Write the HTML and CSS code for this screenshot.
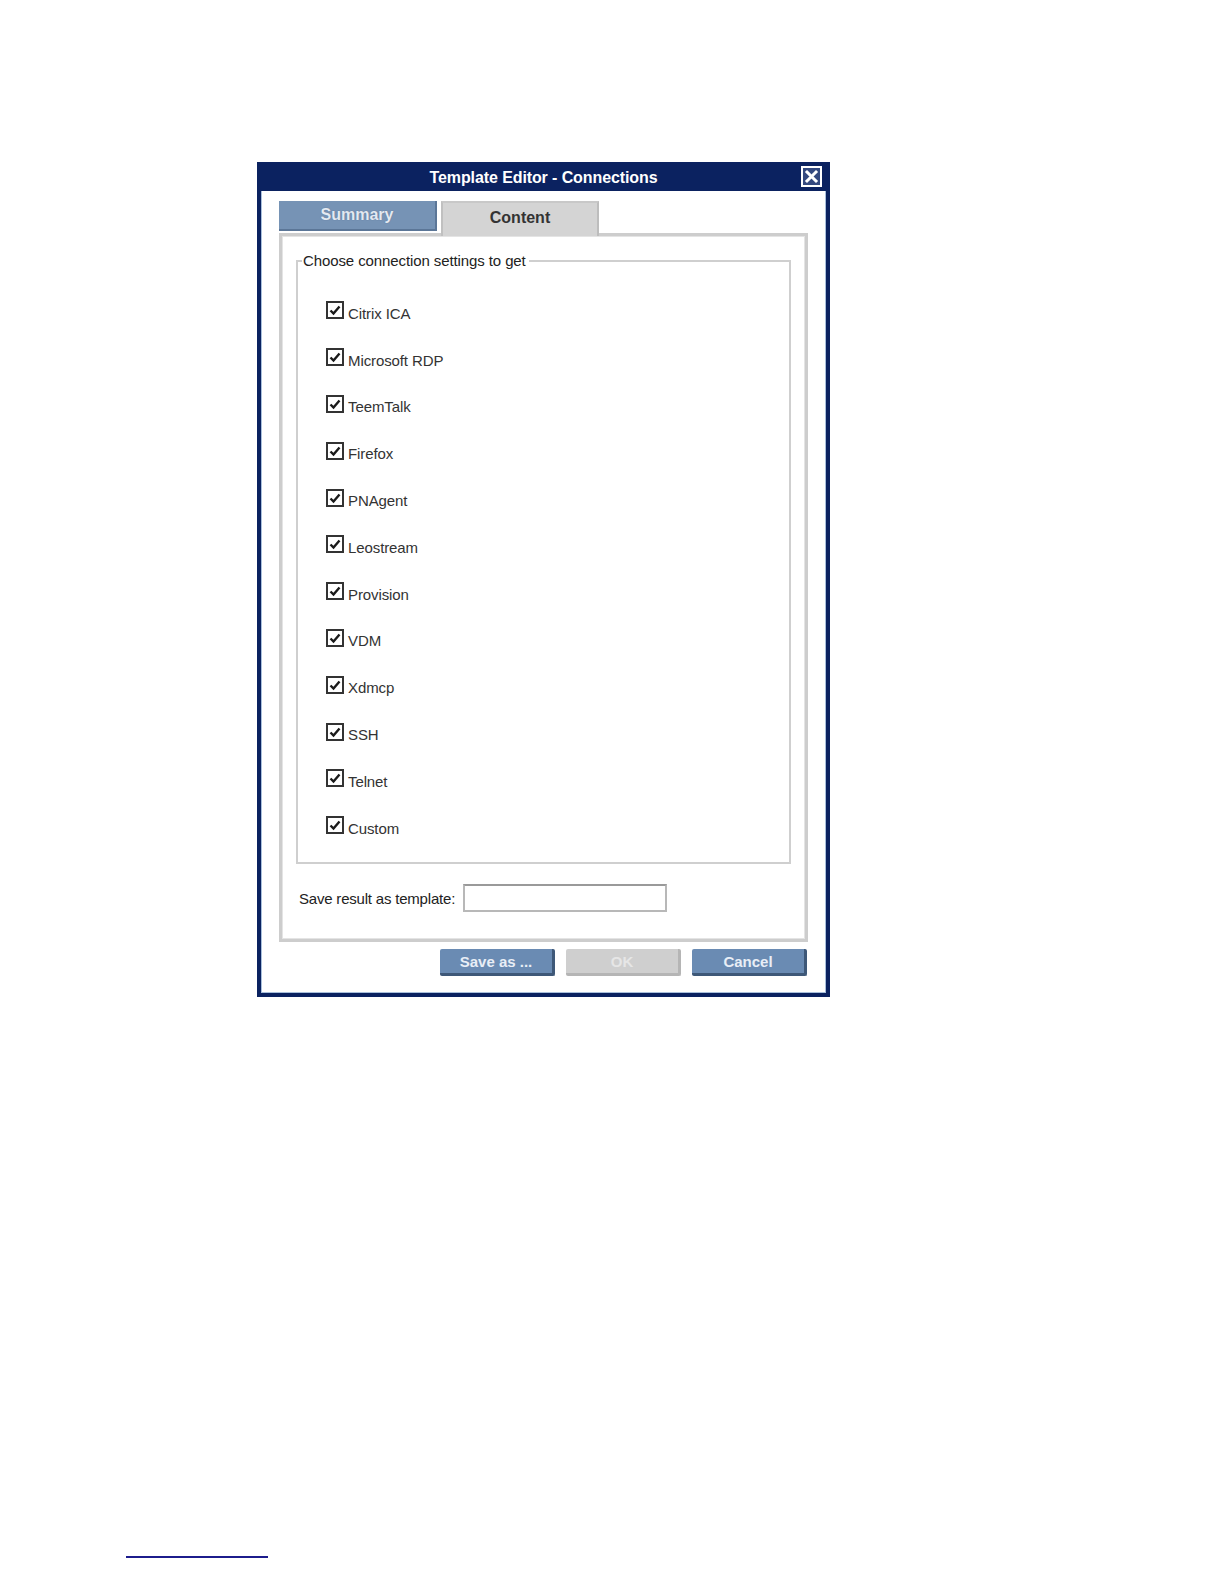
FILE: index.html
```html
<!DOCTYPE html>
<html lang="en">
<head>
    <meta charset="UTF-8">
    <title>Template Editor - Connections</title>
    <link rel="stylesheet" href="styles.css">
</head>
<body>
    <div class="page">
        <div class="dialog">
            <div class="titlebar">
                <span class="title">Template Editor - Connections</span>
                <span class="close">
                    <svg width="17" height="17" viewBox="0 0 17 17">
                        <path d="M4 4 L13 13 M13 4 L4 13" stroke="#fff" stroke-width="3" stroke-linecap="square"/>
                    </svg>
                </span>
            </div>
            <div class="body">
                <div class="tabs">
                    <div class="tab inactive">Summary</div>
                    <div class="tab active">Content</div>
                </div>
                <div class="panel">
                    <fieldset class="group">
                        <legend>Choose connection settings to get</legend>
                        <div class="items">
                            <label class="item"><span class="box"><svg width="12" height="12" viewBox="0 0 12 12"><path d="M1.5 6.5 L4.5 9.5 L10.5 2.5" fill="none" stroke="#1a1a1a" stroke-width="2.4"/></svg></span>Citrix ICA</label>
                            <label class="item"><span class="box"><svg width="12" height="12" viewBox="0 0 12 12"><path d="M1.5 6.5 L4.5 9.5 L10.5 2.5" fill="none" stroke="#1a1a1a" stroke-width="2.4"/></svg></span>Microsoft RDP</label>
                            <label class="item"><span class="box"><svg width="12" height="12" viewBox="0 0 12 12"><path d="M1.5 6.5 L4.5 9.5 L10.5 2.5" fill="none" stroke="#1a1a1a" stroke-width="2.4"/></svg></span>TeemTalk</label>
                            <label class="item"><span class="box"><svg width="12" height="12" viewBox="0 0 12 12"><path d="M1.5 6.5 L4.5 9.5 L10.5 2.5" fill="none" stroke="#1a1a1a" stroke-width="2.4"/></svg></span>Firefox</label>
                            <label class="item"><span class="box"><svg width="12" height="12" viewBox="0 0 12 12"><path d="M1.5 6.5 L4.5 9.5 L10.5 2.5" fill="none" stroke="#1a1a1a" stroke-width="2.4"/></svg></span>PNAgent</label>
                            <label class="item"><span class="box"><svg width="12" height="12" viewBox="0 0 12 12"><path d="M1.5 6.5 L4.5 9.5 L10.5 2.5" fill="none" stroke="#1a1a1a" stroke-width="2.4"/></svg></span>Leostream</label>
                            <label class="item"><span class="box"><svg width="12" height="12" viewBox="0 0 12 12"><path d="M1.5 6.5 L4.5 9.5 L10.5 2.5" fill="none" stroke="#1a1a1a" stroke-width="2.4"/></svg></span>Provision</label>
                            <label class="item"><span class="box"><svg width="12" height="12" viewBox="0 0 12 12"><path d="M1.5 6.5 L4.5 9.5 L10.5 2.5" fill="none" stroke="#1a1a1a" stroke-width="2.4"/></svg></span>VDM</label>
                            <label class="item"><span class="box"><svg width="12" height="12" viewBox="0 0 12 12"><path d="M1.5 6.5 L4.5 9.5 L10.5 2.5" fill="none" stroke="#1a1a1a" stroke-width="2.4"/></svg></span>Xdmcp</label>
                            <label class="item"><span class="box"><svg width="12" height="12" viewBox="0 0 12 12"><path d="M1.5 6.5 L4.5 9.5 L10.5 2.5" fill="none" stroke="#1a1a1a" stroke-width="2.4"/></svg></span>SSH</label>
                            <label class="item"><span class="box"><svg width="12" height="12" viewBox="0 0 12 12"><path d="M1.5 6.5 L4.5 9.5 L10.5 2.5" fill="none" stroke="#1a1a1a" stroke-width="2.4"/></svg></span>Telnet</label>
                            <label class="item"><span class="box"><svg width="12" height="12" viewBox="0 0 12 12"><path d="M1.5 6.5 L4.5 9.5 L10.5 2.5" fill="none" stroke="#1a1a1a" stroke-width="2.4"/></svg></span>Custom</label>
                        </div>
                    </fieldset>
                    <div class="save-row">
                        <span class="save-label">Save result as template:</span>
                        <span class="input"></span>
                    </div>
                </div>
                <div class="buttons">
                    <div class="btn blue">Save as ...</div>
                    <div class="btn disabled">OK</div>
                    <div class="btn blue">Cancel</div>
                </div>
            </div>
        </div>
        <div class="footline"></div>
    </div>
</body>
</html>
```

FILE: styles.css
```css
html, body {
    margin: 0;
    padding: 0;
    background: #fff;
}

.page {
    padding-top: 162px;
    font-family: "Liberation Sans", Arial, sans-serif;
}

.dialog {
    margin-left: 257px;
    width: 573px;
    height: 835px;
    box-sizing: border-box;
    background: #0b2260;
    padding: 0 4px 4px 4px;
    display: flex;
    flex-direction: column;
}

.titlebar {
    height: 29px;
    display: flex;
    align-items: center;
    justify-content: center;
    position: relative;
}
.title {
    color: #fff;
    font-weight: bold;
    font-size: 16px;
    letter-spacing: -0.1px;
    margin-top: 2px;
}
.close {
    position: absolute;
    right: 4px;
    top: 4px;
    width: 17px;
    height: 17px;
    border: 2px solid #fff;
    box-sizing: content-box;
    display: flex;
    background: #34497f;
}

.body {
    flex-grow: 1;
    background: #fff;
    border: 1px solid #a9c0dc;
    border-top: none;
    padding: 10px 17px 0 17px;
    display: flex;
    flex-direction: column;
}

.tabs {
    display: flex;
    gap: 4px;
    height: 32px;
    align-items: flex-start;
}
.tab {
    width: 158px;
    display: flex;
    align-items: center;
    justify-content: center;
    font-size: 16px;
    font-weight: bold;
    box-sizing: border-box;
}
.tab.inactive {
    height: 30px;
    background: #7693b5;
    color: #e3e9f1;
    border-bottom: 2px solid #5b7697;
    border-right: 2px solid #5b7697;
    text-shadow: 0 0 1px #50688a;
}
.tab.active {
    height: 35px;
    background: #d4d4d4;
    color: #333;
    border-top: 2px solid #c8c8c8;
    border-left: 2px solid #c0c0c0;
    border-right: 2px solid #bdbdbd;
    position: relative;
    z-index: 1;
    padding-bottom: 4px;
}

.panel {
    height: 709px;
    box-sizing: border-box;
    border: 3px solid #cdcdcd;
    outline: 1px solid #e4e4e4;
    outline-offset: -4px;
    padding: 16px 14px 0 14px;
    display: flex;
    flex-direction: column;
}

.group {
    margin: 0;
    border: 2px solid #cfcfcf;
    padding: 21px 0 0 0;
    height: 612px;
    box-sizing: border-box;
}
.group legend {
    font-size: 15px;
    color: #222;
    padding: 0 3px 0 1px;
    margin-left: 4px;
    letter-spacing: -0.1px;
}

.items {
    display: flex;
    flex-direction: column;
    padding-left: 28px;
}
.item {
    height: 46.8px;
    display: flex;
    align-items: center;
    font-size: 15px;
    color: #333;
    letter-spacing: -0.1px;
}
.box {
    width: 14px;
    height: 14px;
    border: 2px solid #333;
    background: #fff;
    display: flex;
    align-items: center;
    justify-content: center;
    margin-right: 4px;
    margin-top: -6px;
}

.save-row {
    display: flex;
    align-items: center;
    margin-top: 20px;
    padding-left: 3px;
}
.save-label {
    font-size: 15px;
    color: #222;
    letter-spacing: -0.2px;
    margin-right: 8px;
}
.input {
    width: 200px;
    height: 24px;
    border: 2px solid #b8b8b8;
    border-top-color: #9a9a9a;
    background: #fff;
}

.buttons {
    display: flex;
    justify-content: flex-end;
    gap: 11px;
    margin-top: 7px;
    padding-right: 1px;
}
.btn {
    width: 115px;
    height: 27px;
    box-sizing: border-box;
    display: flex;
    align-items: center;
    justify-content: center;
    font-size: 15px;
    font-weight: bold;
    border-radius: 2px;
}
.btn.blue {
    background: #6a8bb3;
    color: #e8eef6;
    border-right: 3px solid #3e5878;
    border-bottom: 3px solid #3e5878;
}
.btn.disabled {
    background: #cfcfcf;
    color: #e6e6e6;
    border-right: 3px solid #b5b5b5;
    border-bottom: 3px solid #b5b5b5;
}

.footline {
    margin-top: 559px;
    margin-left: 126px;
    width: 142px;
    height: 2px;
    background: #1c1c8c;
}
```
